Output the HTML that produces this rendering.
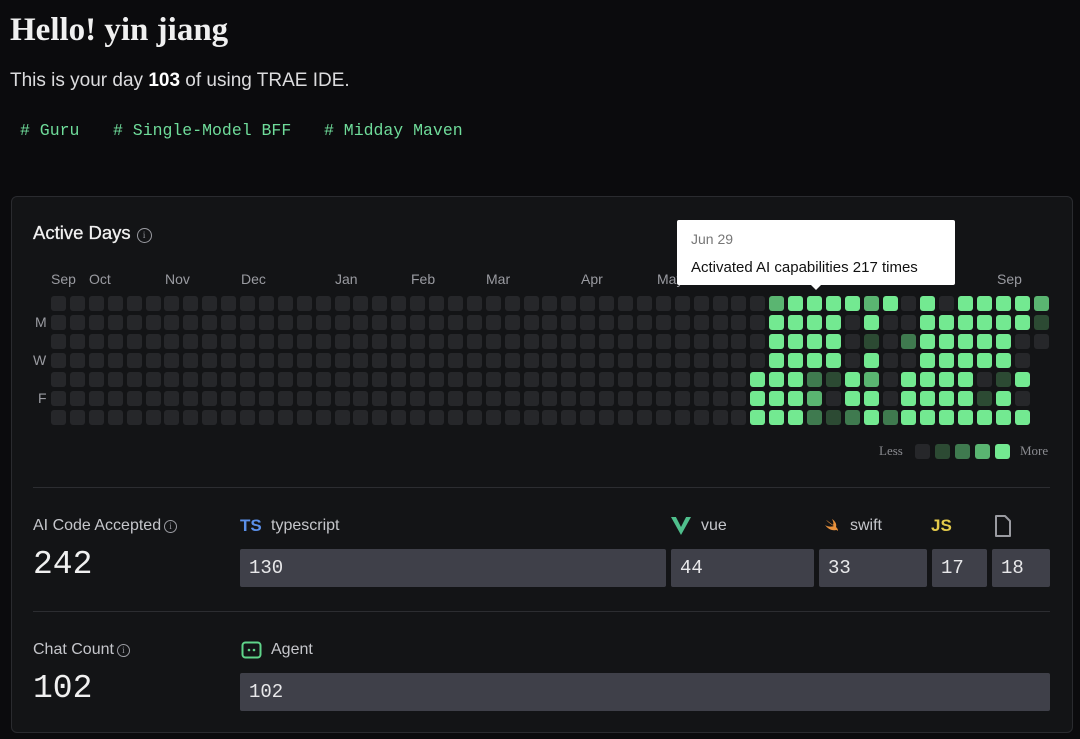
<!DOCTYPE html>
<html><head><meta charset="utf-8"><style>
*{margin:0;padding:0;box-sizing:border-box}
body{width:1080px;height:739px;background:#0b0b0d;color:#e6e6e8;font-family:"Liberation Sans",sans-serif;position:relative;overflow:hidden}
.a{position:absolute;white-space:nowrap}
h1{position:absolute;left:10px;top:12px;font-family:"Liberation Serif",serif;font-size:33px;font-weight:bold;color:#f0f0f0}
.mono{font-family:"Liberation Mono",monospace}
.tag{color:#6fdc9a;font-size:16.5px;top:121px}
.card{position:absolute;left:11px;top:196px;width:1062px;height:537px;background:#131416;border:1px solid #2a2b2f;border-radius:6px}
.c{position:absolute;width:15px;height:15px;border-radius:3px;background:#26272a}
.mon{color:#9a9ba1;font-size:14px;top:271px}
.lbl{color:#c5c6cb;font-size:16px}
.bar{position:absolute;background:#3f4049;border-radius:2px;color:#e8e8ea;font-family:"Liberation Mono",monospace;font-size:19px;padding:8px 9px;height:38px}
.info{display:inline-block;width:13px;height:13px;border:1.3px solid #9a9ba1;border-radius:50%;font-size:9px;line-height:11px;text-align:center;color:#9a9ba1;vertical-align:1px;margin-left:3px;font-family:"Liberation Serif",serif}
.big{font-family:"Liberation Mono",monospace;font-size:33px;color:#f0f0f0}
.hr{position:absolute;left:33px;width:1017px;height:1px;background:#2c2d31}
</style></head><body>
<h1>Hello! yin jiang</h1>
<div class="a" style="left:10px;top:70px;font-size:19px;color:#dcdcde">This is your day <b style="color:#fff">103</b> of using TRAE IDE.</div>
<div class="a mono tag" style="left:20px"># Guru</div>
<div class="a mono tag" style="left:113px"># Single-Model BFF</div>
<div class="a mono tag" style="left:324px"># Midday Maven</div>
<div class="card"></div>
<div class="a" style="left:33px;top:222px;font-size:18.5px;color:#f0f0f0;-webkit-text-stroke:0.3px #f0f0f0">Active Days<span class="info" style="margin-left:6px;width:15px;height:15px;line-height:13px;-webkit-text-stroke:0">i</span></div>
<div class="a mon" style="left:51px">Sep</div><div class="a mon" style="left:89px">Oct</div><div class="a mon" style="left:165px">Nov</div><div class="a mon" style="left:241px">Dec</div><div class="a mon" style="left:335px">Jan</div><div class="a mon" style="left:411px">Feb</div><div class="a mon" style="left:486px">Mar</div><div class="a mon" style="left:581px">Apr</div><div class="a mon" style="left:657px">May</div><div class="a mon" style="left:997px">Sep</div>
<div class="a mon" style="left:35px;top:314px">M</div><div class="a mon" style="left:33px;top:352px">W</div><div class="a mon" style="left:38px;top:390px">F</div>
<div id="g"></div>
<div class="a" style="left:879px;top:443px;font-family:'Liberation Serif',serif;font-size:13px;color:#8a8b90">Less</div>
<div class="c" style="left:915px;top:444px"></div><div class="c" style="left:935px;top:444px;background:#2c4a33"></div><div class="c" style="left:955px;top:444px;background:#3f7a4f"></div><div class="c" style="left:975px;top:444px;background:#5ab571"></div><div class="c" style="left:995px;top:444px;background:#73e991"></div>
<div class="a" style="left:1020px;top:443px;font-family:'Liberation Serif',serif;font-size:13px;color:#8a8b90">More</div>
<div class="a" style="left:677px;top:220px;width:278px;height:65px;background:#fff;border-radius:2px"></div>
<div class="a" style="left:809px;top:283px;width:0;height:0;border-left:7px solid transparent;border-right:7px solid transparent;border-top:7px solid #fff"></div>
<div class="a" style="left:691px;top:231px;font-size:14px;color:#777">Jun 29</div>
<div class="a" style="left:691px;top:259px;font-size:15px;color:#111">Activated AI capabilities 217 times</div>
<div class="hr" style="top:487px"></div>
<div class="hr" style="top:611px"></div>
<div class="a lbl" style="left:33px;top:517px">AI Code Accepted<span class="info">i</span></div>
<div class="a big" style="left:33px;top:546px">242</div>
<div class="a" style="left:240px;top:516px;font-size:17px;font-weight:bold;color:#5b8fe8">TS</div>
<div class="a lbl" style="left:271px;top:517px">typescript</div>
<svg class="a" style="left:670px;top:515px" width="22" height="22" viewBox="0 0 22 22"><path d="M1 2h5l5 9 5-9h5L11 20z" fill="#4fbf8c"/><path d="M6 2h3l2 4 2-4h3L11 12z" fill="#131416"/></svg>
<div class="a lbl" style="left:701px;top:517px">vue</div>
<svg class="a" style="left:823px;top:517px" width="16" height="16" viewBox="0 0 16 16"><path d="M3 3c3 3 6 5 8 6-3 1-6 1-9-1 3 4 7 6 11 5 1 0 2 1 2 1 0-2-1-3-2-4 1-3-1-6-4-8 1 2 2 4 1 6C7 6 5 4 3 3z" fill="#e8913c"/></svg>
<div class="a lbl" style="left:850px;top:517px">swift</div>
<div class="a" style="left:931px;top:516px;font-size:17px;font-weight:bold;color:#e2c94a">JS</div>
<svg class="a" style="left:993px;top:514px" width="20" height="24" viewBox="0 0 20 24"><path d="M3 2h9l5 5v15H3z" fill="none" stroke="#9a9ba1" stroke-width="2" stroke-linejoin="round"/></svg>
<div class="bar" style="left:240px;top:549px;width:426px">130</div>
<div class="bar" style="left:671px;top:549px;width:143px">44</div>
<div class="bar" style="left:819px;top:549px;width:108px">33</div>
<div class="bar" style="left:932px;top:549px;width:55px">17</div>
<div class="bar" style="left:992px;top:549px;width:58px">18</div>
<div class="a lbl" style="left:33px;top:641px">Chat Count<span class="info">i</span></div>
<div class="a big" style="left:33px;top:670px">102</div>
<svg class="a" style="left:241px;top:641px" width="21" height="18" viewBox="0 0 21 18"><rect x="1.5" y="1.5" width="18" height="15" rx="3" fill="none" stroke="#5fd58a" stroke-width="2"/><circle cx="8" cy="9" r="1.3" fill="#5fd58a"/><circle cx="13" cy="9" r="1.3" fill="#5fd58a"/></svg>
<div class="a lbl" style="left:271px;top:641px">Agent</div>
<div class="bar" style="left:240px;top:673px;width:810px">102</div>
<script>
var cols=["#26272a","#2c4a33","#3f7a4f","#5ab571","#73e991"];
var p=[
"0344443404044443",
"0444404004444441",
"0444401024444400",
"044440400444440-",
"444214304444014-",
"444304404444140-",
"444212424444444-"];
var h="";
for(var c=0;c<53;c++)for(var r=0;r<7;r++){
 var v=0;
 if(c>=37){var ch=p[r][c-37];if(ch=="-")continue;v=+ch;}
 h+='<div class="c" style="left:'+Math.round(51+c*18.9)+'px;top:'+(296+r*19)+'px;background:'+cols[v]+'"></div>';
}
document.getElementById("g").innerHTML=h;
</script>
</body></html>
